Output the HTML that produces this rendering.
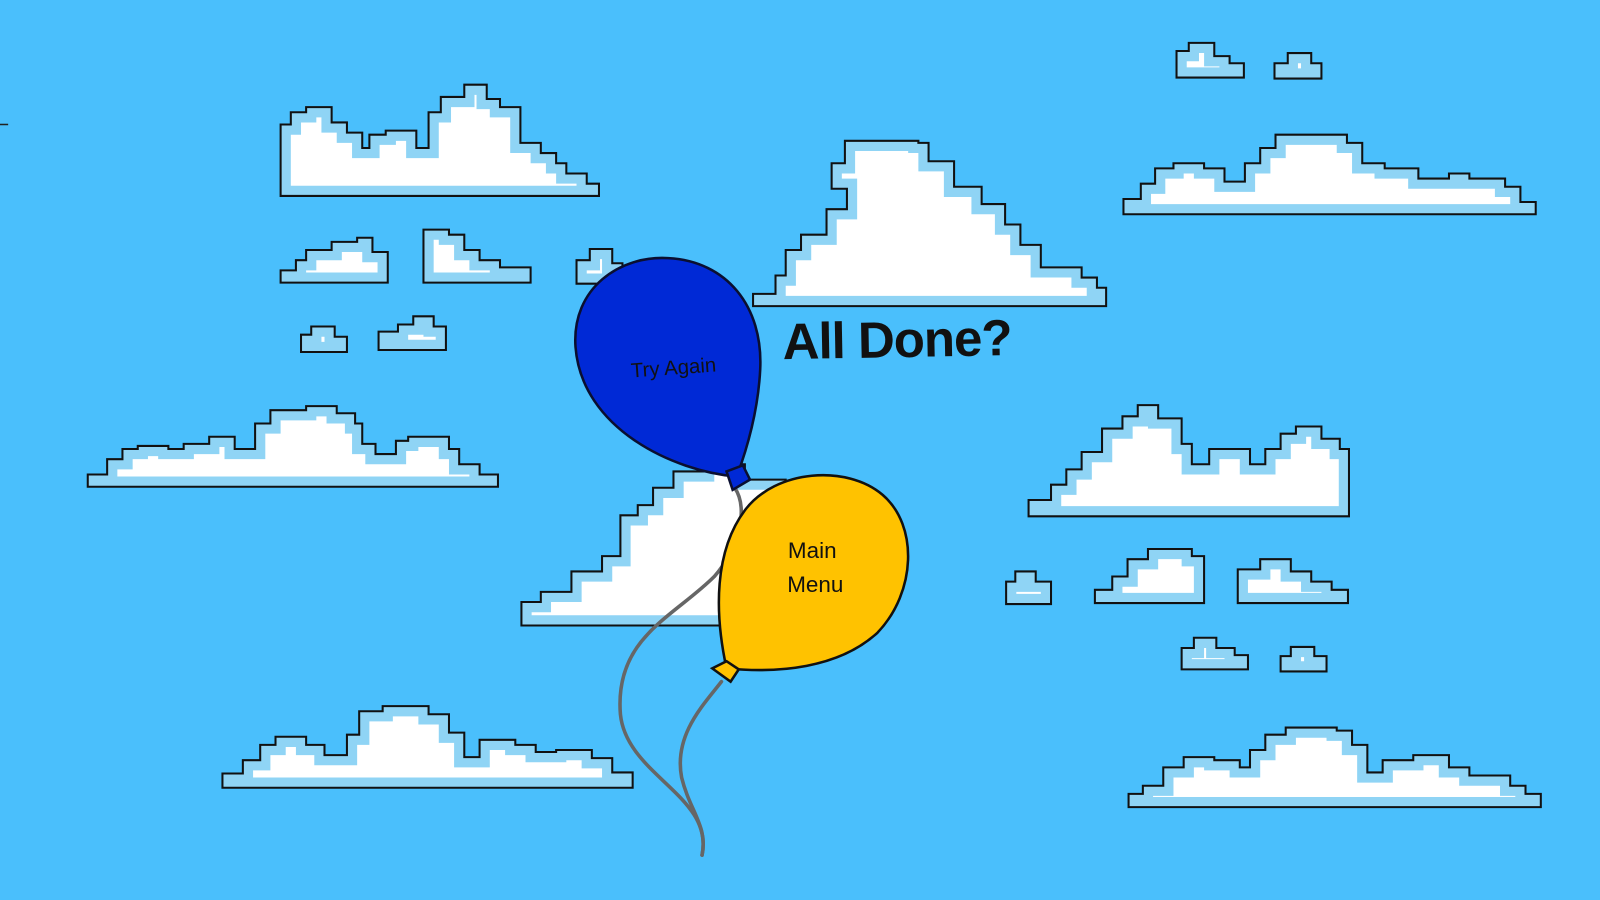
<!DOCTYPE html>
<html><head><meta charset="utf-8"><style>
html,body{margin:0;padding:0;background:#4abffc;overflow:hidden}
svg{display:block}
</style></head><body>
<svg width="1600" height="900" viewBox="0 0 1568 882" preserveAspectRatio="none" xmlns="http://www.w3.org/2000/svg">
<defs>
<path id="c1" d="M275,192 V122 H285 V110 H300 V105 H325 V120 H340 V130 H355 V145 H362 V132 H378 V128 H408 V145 H420 V110 H432 V95 H455 V83 H477 V97 H490 V105 H510 V140 H530 V150 H545 V160 H555 V170 H575 V180 H587 V192 Z"/>
<path id="c2" d="M275,277 V265 H290 V255 H300 V245 H325 V237 H350 V233 H365 V247 H380 V277 Z"/>
<path id="c3" d="M415,277 V225 H440 V230 H455 V245 H470 V255 H490 V262 H520 V277 Z"/>
<path id="c4" d="M565,278 V255 H578 V244 H600 V258 H610 V278 Z"/>
<path id="c5" d="M295,345 V328 H305 V320 H328 V330 H340 V345 Z"/>
<path id="c6" d="M371,343 V325 H390 V318 H405 V310 H425 V320 H437 V343 Z"/>
<path id="c7" d="M86,477 V465 H105 V450 H120 V440 H135 V437 H165 V440 H180 V435 H205 V428 H230 V440 H250 V415 H265 V402 H300 V398 H330 V405 H348 V415 H355 V435 H368 V445 H388 V432 H400 V428 H440 V440 H450 V455 H470 V465 H488 V477 Z"/>
<path id="c8" d="M738,300 V288 H760 V270 H770 V245 H785 V230 H810 V205 H830 V185 H815 V160 H828 V138 H900 V140 H910 V158 H935 V183 H962 V200 H985 V220 H1000 V240 H1020 V262 H1060 V272 H1075 V282 H1084 V300 Z"/>
<path id="c9" d="M511,613 V590 H530 V580 H560 V560 H590 V545 H608 V505 H625 V495 H640 V478 H660 V462 H690 V455 H730 V470 H770 V613 Z"/>
<path id="c10" d="M218,772 V758 H238 V745 H255 V730 H270 V722 H300 V730 H318 V740 H340 V720 H352 V697 H375 V692 H420 V700 H440 V718 H455 V742 H470 V725 H505 V730 H525 V737 H545 V735 H580 V743 H600 V757 H620 V772 Z"/>
<path id="c11" d="M1153,76 V50 H1165 V42 H1190 V55 H1205 V62 H1219 V76 Z"/>
<path id="c12" d="M1249,77 V62 H1262 V52 H1285 V62 H1295 V77 Z"/>
<path id="c13" d="M1101,210 V195 H1118 V180 H1132 V165 H1150 V160 H1180 V165 H1200 V178 H1220 V160 H1235 V145 H1250 V132 H1320 V140 H1335 V160 H1357 V165 H1390 V175 H1420 V170 H1440 V175 H1475 V183 H1490 V198 H1505 V210 Z"/>
<path id="c14" d="M1008,506 V490 H1030 V475 H1045 V460 H1060 V443 H1080 V420 H1100 V408 H1115 V397 H1135 V410 H1158 V435 H1168 V455 H1185 V440 H1215 V440 H1225 V455 H1240 V440 H1255 V425 H1270 V418 H1295 V430 H1313 V440 H1322 V506 Z"/>
<path id="c15" d="M986,592 V570 H995 V560 H1015 V570 H1030 V592 Z"/>
<path id="c16" d="M1073,591 V578 H1090 V565 H1105 V548 H1125 V538 H1168 V545 H1180 V591 Z"/>
<path id="c17" d="M1213,591 V558 H1235 V548 H1265 V560 H1285 V570 H1305 V578 H1321 V591 Z"/>
<path id="c18" d="M1158,656 V635 H1170 V625 H1192 V635 H1210 V642 H1223 V656 Z"/>
<path id="c19" d="M1255,658 V643 H1265 V634 H1288 V643 H1300 V658 Z"/>
<path id="c20" d="M1106,791 V778 H1120 V770 H1140 V752 H1160 V742 H1190 V745 H1215 V752 H1225 V735 H1240 V720 H1260 V713 H1310 V716 H1325 V730 H1340 V757 H1355 V745 H1385 V740 H1420 V752 H1440 V760 H1480 V770 H1495 V778 H1510 V791 Z"/>
<clipPath id="k1"><use href="#c1"/></clipPath><clipPath id="k2"><use href="#c2"/></clipPath>
<clipPath id="k3"><use href="#c3"/></clipPath><clipPath id="k4"><use href="#c4"/></clipPath>
<clipPath id="k5"><use href="#c5"/></clipPath><clipPath id="k6"><use href="#c6"/></clipPath>
<clipPath id="k7"><use href="#c7"/></clipPath><clipPath id="k8"><use href="#c8"/></clipPath>
<clipPath id="k9"><use href="#c9"/></clipPath><clipPath id="k10"><use href="#c10"/></clipPath>
<clipPath id="k11"><use href="#c11"/></clipPath><clipPath id="k12"><use href="#c12"/></clipPath>
<clipPath id="k13"><use href="#c13"/></clipPath><clipPath id="k14"><use href="#c14"/></clipPath>
<clipPath id="k15"><use href="#c15"/></clipPath><clipPath id="k16"><use href="#c16"/></clipPath>
<clipPath id="k17"><use href="#c17"/></clipPath><clipPath id="k18"><use href="#c18"/></clipPath>
<clipPath id="k19"><use href="#c19"/></clipPath><clipPath id="k20"><use href="#c20"/></clipPath>
</defs>
<rect width="1568" height="882" fill="#4abffc"/>
<line x1="0" y1="122" x2="8" y2="122" stroke="#222" stroke-width="1.5"/>
<g fill="#fff" stroke="#8fd4f5" stroke-width="20">
<use href="#c1" clip-path="url(#k1)"/><use href="#c2" clip-path="url(#k2)"/><use href="#c3" clip-path="url(#k3)"/>
<use href="#c4" clip-path="url(#k4)"/><use href="#c5" clip-path="url(#k5)"/><use href="#c6" clip-path="url(#k6)"/>
<use href="#c7" clip-path="url(#k7)"/><use href="#c8" clip-path="url(#k8)"/><use href="#c9" clip-path="url(#k9)"/>
<use href="#c10" clip-path="url(#k10)"/><use href="#c11" clip-path="url(#k11)"/><use href="#c12" clip-path="url(#k12)"/>
<use href="#c13" clip-path="url(#k13)"/><use href="#c14" clip-path="url(#k14)"/><use href="#c15" clip-path="url(#k15)"/>
<use href="#c16" clip-path="url(#k16)"/><use href="#c17" clip-path="url(#k17)"/><use href="#c18" clip-path="url(#k18)"/>
<use href="#c19" clip-path="url(#k19)"/><use href="#c20" clip-path="url(#k20)"/>
</g>
<g fill="none" stroke="#111" stroke-width="2">
<use href="#c1"/><use href="#c2"/><use href="#c3"/><use href="#c4"/><use href="#c5"/><use href="#c6"/><use href="#c7"/>
<use href="#c8"/><use href="#c9"/><use href="#c10"/><use href="#c11"/><use href="#c12"/><use href="#c13"/><use href="#c14"/>
<use href="#c15"/><use href="#c16"/><use href="#c17"/><use href="#c18"/><use href="#c19"/><use href="#c20"/>
</g>
<g fill="none" stroke="#666" stroke-width="3.5" stroke-linecap="round">
<path d="M720,478 C735,500 722,540 700,565 C660,605 602,625 608,700 C614,760 700,780 688,838"/>
<path d="M707,668 C690,690 660,720 668,762 C676,795 694,810 688,838"/>
</g>
<path d="M722,467 C660,462 570,420 564,340 C560,282 608,250 655,253 C712,256 748,300 745,362 C743,402 732,440 722,467 Z" fill="#0029d6" stroke="#0a0f30" stroke-width="2.5"/>
<path d="M712,462 L728,456 L735,470 L718,480 Z" fill="#0029d6" stroke="#0a0f30" stroke-width="2.5"/>
<path d="M712,655 C700,600 700,540 730,500 C760,460 830,455 865,485 C900,515 898,580 860,620 C822,655 762,660 712,655 Z" fill="#ffc200" stroke="#111" stroke-width="2.5"/>
<path d="M698,655 L712,648 L724,656 L716,668 Z" fill="#ffc200" stroke="#111" stroke-width="2.5"/>
<g font-family="Liberation Sans, sans-serif" fill="#111">
<text x="660" y="367" font-size="20" text-anchor="middle" transform="rotate(-4 660 360)">Try Again</text>
<text x="796" y="547" font-size="22" text-anchor="middle">Main</text>
<text x="799" y="580" font-size="22" text-anchor="middle">Menu</text>
<text x="767" y="350" font-size="50" font-weight="bold" letter-spacing="-1" transform="rotate(-1 880 335)">All Done?</text>
</g>
</svg>
</body></html>
